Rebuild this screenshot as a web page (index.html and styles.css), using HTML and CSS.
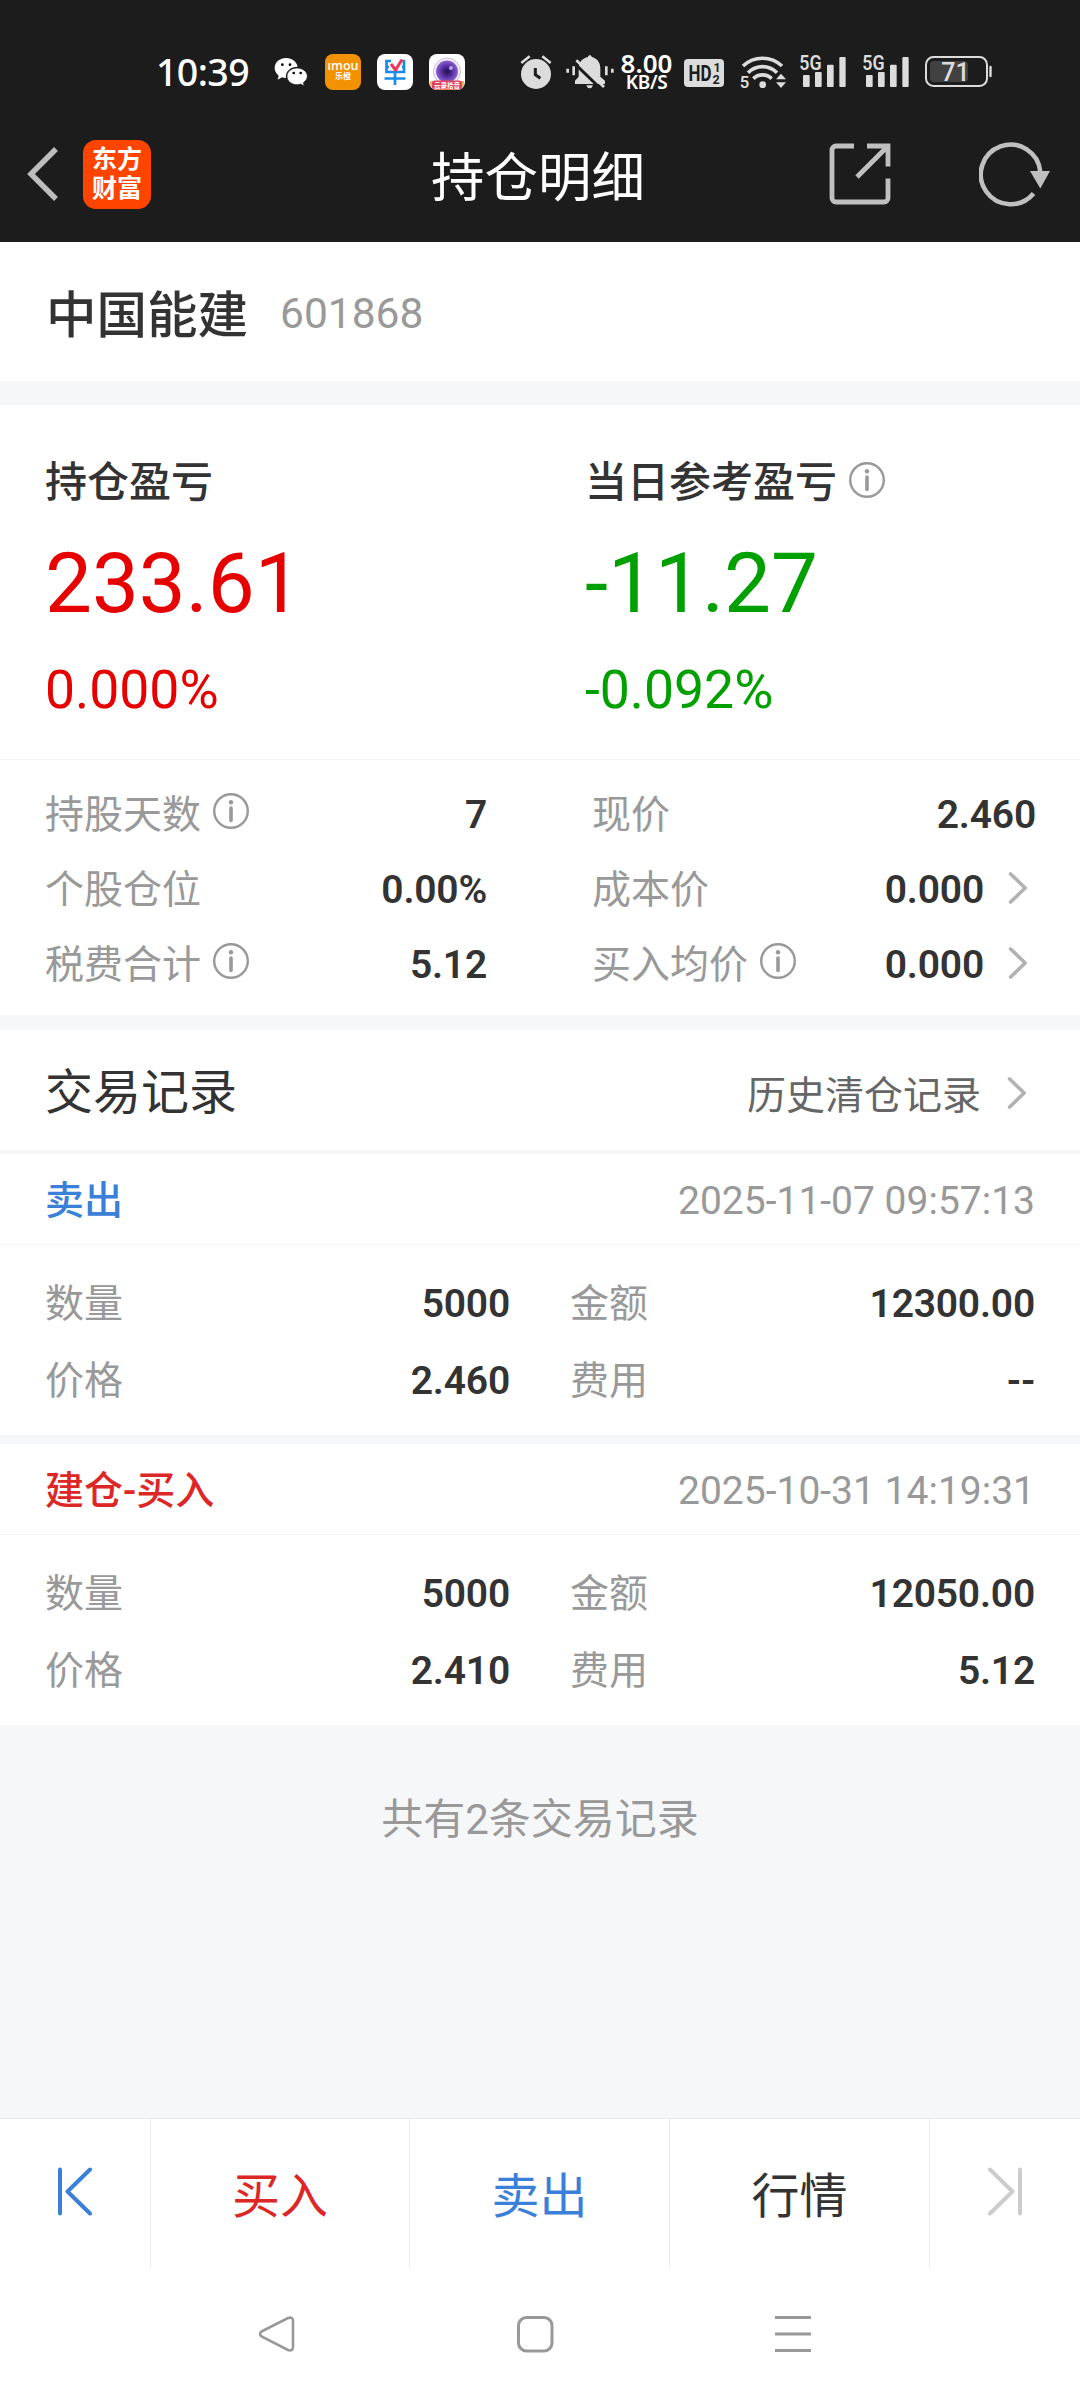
FILE: index.html
```html
<!DOCTYPE html>
<html lang="zh-CN">
<head>
<meta charset="utf-8">
<title>持仓明细</title>
<link rel="stylesheet" href="styles.css">
</head>
<body>
<svg class="defs" width="0" height="0" aria-hidden="true">
  <symbol id="info" viewBox="0 0 36 36">
    <circle cx="18" cy="18" r="16.8" fill="none" stroke="#999" stroke-width="2.4"/>
    <circle cx="18" cy="9.2" r="2.2" fill="#999"/>
    <path d="M18 15v12.5" stroke="#999" stroke-width="3.6" stroke-linecap="round"/>
  </symbol>
  <symbol id="chevron" viewBox="0 0 20 34">
    <path d="M2.6 3l14.6 14L2.6 31" fill="none" stroke="#b2b2b2" stroke-width="3.6" stroke-linecap="round" stroke-linejoin="round"/>
  </symbol>
  <symbol id="signal" viewBox="0 0 144 120">
    <g fill="#dcdcdc">
      <rect x="12" y="69" width="20" height="36" rx="3"/>
      <rect x="48" y="60" width="20" height="45" rx="3"/>
      <rect x="84" y="38" width="20" height="67" rx="3"/>
      <rect x="121" y="15" width="19" height="90" rx="3"/>
    </g>
  </symbol>
</svg>

<header class="top">
  <div class="status">
    <span class="time">10:39</span>
    <svg class="wechat" width="38" height="40" viewBox="396 36 114 120">
      <path d="M439 54c-20 0-35 13-35 30 0 9 5 17 12 23l-3 12 13-7c4 1 8 2 12 2-3-20 14-34 35-34-3-15-17-26-34-26z" fill="#fff"/>
      <path d="M471 84c-17 0-30 11-30 25s13 25 30 25c4 0 8-1 11-2l11 6-3-10c7-5 12-12 12-19 0-14-14-25-31-25z" fill="#fff" stroke="#1c1c1c" stroke-width="2"/>
      <circle cx="427" cy="74" r="4"/><circle cx="450" cy="74" r="4"/>
      <circle cx="461" cy="99" r="4"/><circle cx="482" cy="99" r="4"/>
    </svg>
    <svg class="app" width="36" height="36" viewBox="0 0 36 36">
      <rect width="36" height="36" rx="8" fill="#f39200"/>
      <text x="18" y="16" text-anchor="middle" textLength="31" lengthAdjust="spacingAndGlyphs" class="imou">ımou</text>
      <text x="18" y="25" text-anchor="middle" class="imou-cn">乐橙</text>
    </svg>
    <svg class="app" width="36" height="36" viewBox="0 0 36 36">
      <rect width="36" height="36" rx="8" fill="#fff"/>
      <path d="M14 7H9.500v11h17.500V7h-2M9 13h3m13 0h2M18 18v13M7.500 24.500h21" fill="none" stroke="#178ce8" stroke-width="2.700"/>
      <path d="M14 10l4.500 6L25 5.500" fill="none" stroke="#f0385f" stroke-width="3"/>
    </svg>
    <svg class="app" width="36" height="36" viewBox="0 0 36 36">
      <defs>
        <radialGradient id="lens"><stop offset="0" stop-color="#20103f"/><stop offset=".4" stop-color="#4c2593"/><stop offset="1" stop-color="#8b63d2"/></radialGradient>
      </defs>
      <rect width="36" height="36" rx="8" fill="#fff"/>
      <path d="M1 27h34v2a7 7 0 0 1-7 7H8a7 7 0 0 1-7-7z" fill="#f0b45e"/>
      <circle cx="18" cy="17.500" r="13.500" fill="#f4f1fb" stroke="#c4bdda"/>
      <circle cx="18" cy="17.500" r="11" fill="url(#lens)"/>
      <circle cx="22" cy="14" r="2" fill="#b6a2f0"/>
      <rect x="3" y="26.500" width="30" height="9" rx="3" fill="#e4405f"/>
      <text x="18" y="33.500" text-anchor="middle" class="lens-cn">云录拾音</text>
    </svg>

    <svg class="alarm" width="36" height="40" viewBox="57 36 108 120">
      <circle cx="108" cy="102" r="45" fill="#dcdcdc"/>
      <path d="M64 69l25-20M152 69l-25-20" stroke="#dcdcdc" stroke-width="8"/>
      <path d="M106 84v20l15 11" fill="none" stroke="#1c1c1c" stroke-width="9"/>
    </svg>
    <svg class="bell" width="52" height="40" viewBox="189 36 156 120">
      <path d="M225 132v-10l11-12V84c0-17 11-29 28-33 0-7 11-7 11 0 16 4 26 16 26 33v26l14 12v10z" fill="#dcdcdc"/>
      <path d="M259 136h20q-3 9-10 9t-10-9z" fill="#dcdcdc"/>
      <path d="M221 68l82 79" stroke="#1c1c1c" stroke-width="9"/>
      <path d="M229 61l83 80" stroke="#dcdcdc" stroke-width="8"/>
      <path d="M203 86v12M221 79v27M319 79v27M337 86v12" stroke="#dcdcdc" stroke-width="8"/>
    </svg>
    <div class="speed"><b>8.00</b><span>KB/S</span></div>
    <svg class="hd" width="40" height="40" viewBox="0 0 40 40">
      <rect y="7" width="40" height="28" rx="4" fill="#dcdcdc"/>
      <text x="4.500" y="29" textLength="23" lengthAdjust="spacingAndGlyphs" class="hd-main">HD</text>
      <text x="29.500" y="19.500" class="hd-sub">1</text>
      <text x="28.500" y="32" class="hd-sub">2</text>
    </svg>
    <svg class="wifi" width="49" height="40" viewBox="717 36 147 120">
      <g fill="none" stroke="#dcdcdc" stroke-width="11">
        <path d="M729 78a85 85 0 0 1 117 0"/>
        <path d="M744 98a61 61 0 0 1 87 0"/>
        <path d="M760 116a39 39 0 0 1 55 0"/>
      </g>
      <circle cx="788" cy="134" r="10" fill="#dcdcdc"/>
      <path d="M828 118l15-17 15 17zM828 127h30l-15 17z" fill="#dcdcdc"/>
      <text x="719" y="144" class="tiny">5</text>
    </svg>
    <svg class="sig" width="48" height="40" viewBox="0 0 144 120">
      <use href="#signal"/>
      <text x="1" y="54" textLength="67" lengthAdjust="spacingAndGlyphs" class="net">5G</text>
    </svg>
    <svg class="sig" width="48" height="40" viewBox="0 0 144 120">
      <use href="#signal"/>
      <text x="1" y="54" textLength="67" lengthAdjust="spacingAndGlyphs" class="net">5G</text>
    </svg>
    <svg class="battery" width="69" height="40" viewBox="0 0 69 40">
      <rect x="2" y="5" width="61" height="29" rx="7.500" fill="none" stroke="#dcdcdc" stroke-width="2"/>
      <rect x="6" y="9" width="38" height="21" rx="4" fill="#414141"/>
      <path d="M66.500 15v9" stroke="#dcdcdc" stroke-width="2.400" stroke-linecap="round"/>
      <text x="31.500" y="28.500" text-anchor="middle" class="charge">71</text>
    </svg>
  </div>

  <nav class="titlebar">
    <svg class="back" width="36" height="60" viewBox="0 0 36 60"><path d="M32 5L7 30l25 25" fill="none" stroke="#bdbdbd" stroke-width="5.500"/></svg>
    <div class="logo"><span>东方</span><span>财富</span></div>
    <h1>持仓明细</h1>
    <svg class="share" width="62" height="62" viewBox="0 0 62 62" fill="none" stroke="#c0c0c0" stroke-width="4.800">
      <path d="M25 3H7a4 4 0 0 0-4 4v48a4 4 0 0 0 4 4h48a4 4 0 0 0 4-4V35.500M38 3h21v20.500M28 34L58 4"/>
    </svg>
    <svg class="refresh" width="72" height="66" viewBox="0 0 72 66">
      <path d="M54.500 52.500A29.800 29.800 0 1 1 61.300 31" fill="none" stroke="#c0c0c0" stroke-width="4.600"/>
      <path d="M51 30h20l-9.700 17.500z" fill="#c0c0c0"/>
    </svg>
  </nav>
</header>

<main>
  <section class="stock"><h2>中国能建</h2><span>601868</span></section>

  <section class="profit">
    <div class="figure up">
      <h3>持仓盈亏</h3>
      <p class="amount">233.61</p>
      <p class="rate">0.000%</p>
    </div>
    <div class="figure down">
      <h3>当日参考盈亏<svg class="info"><use href="#info"/></svg></h3>
      <p class="amount">-11.27</p>
      <p class="rate">-0.092%</p>
    </div>
  </section>

  <section class="stats">
    <dl>
      <div class="stat"><dt>持股天数<svg class="info"><use href="#info"/></svg></dt><dd>7</dd></div>
      <div class="stat"><dt>个股仓位</dt><dd>0.00%</dd></div>
      <div class="stat"><dt>税费合计<svg class="info"><use href="#info"/></svg></dt><dd>5.12</dd></div>
    </dl>
    <dl>
      <div class="stat"><dt>现价</dt><dd>2.460</dd></div>
      <div class="stat"><dt>成本价</dt><dd>0.000<svg class="chev"><use href="#chevron"/></svg></dd></div>
      <div class="stat"><dt>买入均价<svg class="info"><use href="#info"/></svg></dt><dd>0.000<svg class="chev"><use href="#chevron"/></svg></dd></div>
    </dl>
  </section>

  <section class="records-head">
    <h2>交易记录</h2>
    <a>历史清仓记录<svg class="chev"><use href="#chevron"/></svg></a>
  </section>

  <article class="record">
    <header class="sell"><h3>卖出</h3><time>2025-11-07 09:57:13</time></header>
    <dl>
      <div class="cell"><dt>数量</dt><dd>5000</dd></div>
      <div class="cell"><dt>金额</dt><dd>12300.00</dd></div>
      <div class="cell"><dt>价格</dt><dd>2.460</dd></div>
      <div class="cell"><dt>费用</dt><dd>--</dd></div>
    </dl>
  </article>
  <article class="record">
    <header class="buy"><h3>建仓-买入</h3><time>2025-10-31 14:19:31</time></header>
    <dl>
      <div class="cell"><dt>数量</dt><dd>5000</dd></div>
      <div class="cell"><dt>金额</dt><dd>12050.00</dd></div>
      <div class="cell"><dt>价格</dt><dd>2.410</dd></div>
      <div class="cell"><dt>费用</dt><dd>5.12</dd></div>
    </dl>
  </article>
  <p class="total">共有2条交易记录</p>
</main>

<footer class="actions">
  <a><svg width="38" height="50" viewBox="0 0 38 50" fill="none" stroke="#3a80d8" stroke-width="4" stroke-linecap="round" stroke-linejoin="round"><path d="M4 3.500v44M34 3.500L11.500 25.500 34 47.500"/></svg></a>
  <a class="buy">买入</a>
  <a class="sell">卖出</a>
  <a>行情</a>
  <a><svg width="38" height="50" viewBox="0 0 38 50" fill="none" stroke="#ccc" stroke-width="4" stroke-linecap="round" stroke-linejoin="round"><path d="M34 3.500v44M4 3.500L26.500 25.500 4 47.500"/></svg></a>
</footer>

<div class="sysnav">
  <svg width="38" height="38" viewBox="0 0 38 38"><path d="M3.500 16.500L30 3q5-1.500 5 3v26q0 4.500-5 3L3.500 21.500q-3-2.500 0-5z" fill="none" stroke="#999" stroke-width="2.600"/></svg>
  <svg width="38" height="38" viewBox="0 0 38 38"><rect x="2.500" y="2.500" width="33.500" height="33.500" rx="8" fill="none" stroke="#999" stroke-width="3"/></svg>
  <svg width="38" height="38" viewBox="0 0 38 38"><path d="M1 2.500h36M1 19h36M1 35.500h36" stroke="#999" stroke-width="3"/></svg>
</div>
</body>
</html>
```
FILE: styles.css
```css
* { box-sizing: border-box; margin: 0; padding: 0; }
body {
  width: 1080px;
  height: 2400px;
  display: flex;
  flex-direction: column;
  overflow: hidden;
  background: #f6f7f9;
  color: #333;
  font-family: Roboto, "Noto Sans CJK SC", sans-serif;
}
h1, h2, h3, a { font-weight: 400; }
svg { display: block; flex: none; }
.defs { position: absolute; }

/* status bar and title bar */
.top { height: 242px; background: #1c1c1c; color: #fff; flex: none; }
.status { display: flex; align-items: center; height: 106px; padding: 38px 0 0 156px; line-height: 1; }
.status > * { flex: none; }
.time { width: 116px; padding-bottom: 1px; font: 500 37.500px/40px "Noto Sans", sans-serif; letter-spacing: -.6px; }
.wechat { margin-right: 15px; }
.app { margin-right: 16px; }
.app:nth-of-type(4) { margin-right: 54px; }
.imou { font: 600 12px "Open Sans", sans-serif; fill: #fff; }
.imou-cn { font: 700 8px "Noto Sans CJK SC", sans-serif; fill: #fff; }
.lens-cn { font: 700 6.500px "Noto Sans CJK SC", sans-serif; fill: #fff; }
.alarm { margin-right: 8px; }
.bell { margin-right: 4px; }
.speed { width: 58px; margin-right: 7px; padding: 0 3px 1px 0; display: flex; flex-direction: column; align-items: center; font-family: "Noto Sans", sans-serif; }
.speed b { font-size: 26px; line-height: 20px; font-weight: 600; }
.speed span { font-size: 19px; line-height: 18px; font-weight: 600; letter-spacing: -.3px; }
.hd { margin-right: 15px; }
.hd-main { font: 700 22px Roboto, sans-serif; fill: #1c1c1c; }
.hd-sub { font: 700 12.500px Roboto, sans-serif; fill: #1c1c1c; }
.tiny { font: 600 50px Roboto, sans-serif; fill: #dcdcdc; }
.net { font: 600 58px Roboto, sans-serif; fill: #dcdcdc; }
.wifi { margin-right: 11px; }
.sig { margin-right: 15px; }
.battery { margin-left: -1px; }
.charge { font: 500 25px Roboto, sans-serif; fill: #dcdcdc; }

.titlebar { display: flex; align-items: center; height: 136px; padding: 0 29px 0 24px; }
.logo {
  width: 68px; height: 69px; margin-left: 23px; border-radius: 13px;
  background: #ff4400;
  display: flex; flex-direction: column; align-items: center; justify-content: center;
  font-weight: 700; font-size: 25px; line-height: 29px;
}
.titlebar h1 { flex: 1; margin-left: 142px; padding: 10px 0 0 138px; font-size: 53.500px; line-height: 70px; }
.share { margin-right: 88px; }

/* stock name */
.stock { display: flex; align-items: center; gap: 32px; height: 139px; padding: 8px 45px 0 46px; background: #fff; }
.stock h2 { font-size: 50.500px; line-height: 70px; font-weight: 500; }
.stock span { font-size: 42.500px; line-height: 60px; color: #999; padding-bottom: 4px; }

/* profit and loss */
.profit { display: grid; grid-template-columns: 540px 540px; height: 354px; margin-top: 24px; padding: 48px 0 0 45px; background: #fff; }
.profit h3 { display: flex; align-items: center; gap: 12px; font-size: 42px; line-height: 60px; font-weight: 500; }
.info { width: 36px; height: 36px; margin-bottom: 7px; }
.amount { margin-top: 21px; font-size: 83.500px; line-height: 100px; }
.rate { margin-top: 26px; font-size: 53.500px; line-height: 60px; }
.up p { color: #e60000; }
.down p { color: #00a000; }

/* position details */
.stats { display: grid; grid-template-columns: 442px 444px; gap: 105px; height: 256px; padding: 17px 45px 0; border-top: 1px solid #f4f5f7; background: #fff; }
.stat, .cell { display: flex; justify-content: space-between; align-items: center; font-size: 39px; line-height: 50px; }
.stat { height: 75px; }
dt { display: flex; align-items: center; gap: 12px; color: #999; }
dd { display: flex; align-items: center; font-weight: 600; letter-spacing: -.2px; }
.chev { width: 20px; height: 34px; margin: 0 8px 4px 24px; }

/* trade records */
.records-head { display: flex; justify-content: space-between; align-items: center; height: 120px; margin-top: 15px; padding: 5px 45px 0; background: #fff; }
.records-head h2 { font-size: 48px; line-height: 60px; }
.records-head a { display: flex; align-items: center; padding-top: 6px; font-size: 39px; line-height: 50px; color: #666; }
.records-head .chev { margin: 0 8px 6px 26px; }
.record { height: 281px; margin-top: 4px; background: #fff; }
.record + .record { margin-top: 9px; }
.record header { display: flex; justify-content: space-between; align-items: center; height: 91px; padding: 3px 45px 0; border-bottom: 1px solid #f4f5f7; font-size: 39px; line-height: 50px; }
.record h3 { font-size: 39px; font-weight: 500; }
.record time { color: #999; }
.record dl { display: grid; grid-template-columns: 465px 465px; column-gap: 60px; grid-auto-rows: 77px; padding: 20px 45px 0; }
.sell { color: #3a80d8; }
.buy { color: #dd2727; }
.total { margin-top: 63px; text-align: center; font-size: 42px; line-height: 64px; color: #999; }

/* bottom actions */
main { flex: 1; }
.actions { display: grid; grid-template-columns: 151px 259px 260px 260px 150px; flex: none; height: 150px; border-top: 1px solid #ebebeb; background: #fff; }
.actions a { display: flex; align-items: center; justify-content: center; border-right: 1px solid #ececec; padding-top: 6px; font-size: 48px; line-height: 60px; }
.actions a:last-child { border: 0; }
.actions svg { margin-bottom: 11px; }
.sysnav { display: flex; justify-content: space-between; flex: none; height: 132px; padding: 47px 268px 0 258px; background: #fff; }
```
